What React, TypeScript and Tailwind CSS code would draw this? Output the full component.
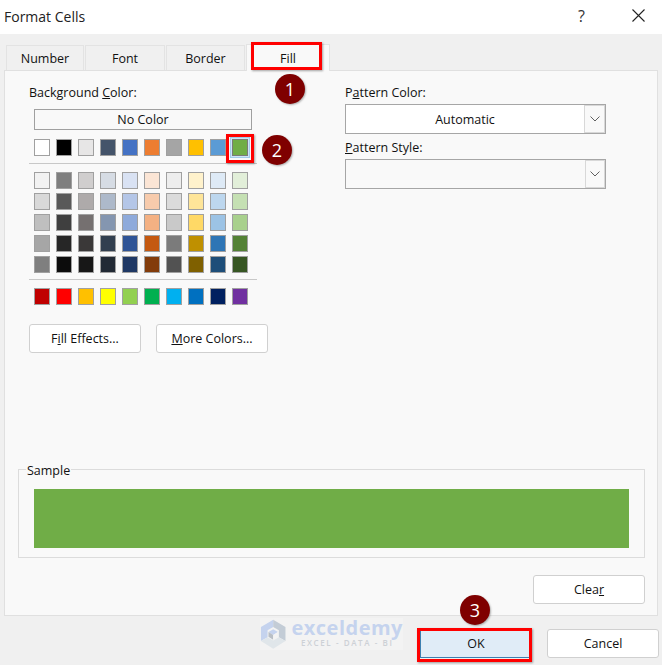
import React from 'react';

const themeRow = ['#ffffff', '#000000', '#e7e6e6', '#44546a', '#4472c4', '#ed7d31', '#a5a5a5', '#ffc000', '#5b9bd5', '#70ad47'];

const tintRows = [
  ['#f2f2f2', '#7f7f7f', '#d0cece', '#d6dce4', '#d9e2f3', '#fbe5d5', '#ededed', '#fff2cc', '#deeaf6', '#e2efd9'],
  ['#d9d9d9', '#595959', '#aeaaaa', '#adb9ca', '#b4c6e7', '#f7cbac', '#dbdbdb', '#fee599', '#bdd7ee', '#c5e0b3'],
  ['#bfbfbf', '#3f3f3f', '#757070', '#8496b0', '#8eaadb', '#f4b183', '#c9c9c9', '#ffd966', '#9cc3e5', '#a8d08d'],
  ['#a6a6a6', '#262626', '#3a3838', '#323f4f', '#2f5496', '#c45911', '#7b7b7b', '#bf9000', '#2e75b5', '#538135'],
  ['#7f7f7f', '#0c0c0c', '#171717', '#222a35', '#1f3864', '#833c0b', '#525252', '#7f6000', '#1e4e79', '#375623'],
];

const standardRow = ['#c00000', '#ff0000', '#ffc000', '#ffff00', '#92d050', '#00b050', '#00b0f0', '#0070c0', '#002060', '#7030a0'];

const Swatches: React.FC<{ colors: string[]; selected?: number }> = ({ colors, selected }) => (
  <div className="flex gap-[6px]">
    {colors.map((color, i) => (
      <div
        key={i}
        className={`w-[16px] h-[17px] border ${i === selected ? 'border-[#7a7a7a] shadow-[0_0_0_1px_#cde4f7,0_0_0_2px_#a3cbea]' : 'border-[#a0a0a0]'}`}
        style={{ backgroundColor: color }}
      />
    ))}
  </div>
);

const Marker: React.FC<{ n: number; className: string }> = ({ n, className }) => (
  <div className={`absolute z-20 w-[30px] h-[30px] rounded-full bg-[#7f0000] text-white text-[18px] flex items-center justify-center shadow-[1px_1px_2px_rgba(0,0,0,0.3)] ${className}`}>
    {n}
  </div>
);

const Tab: React.FC<{ label: string; width: string }> = ({ label, width }) => (
  <div className={`${width} h-[25px] pt-[2px] bg-[#f0f0f0] border border-b-0 border-[#e3e3e3] flex items-center justify-center`}>
    {label}
  </div>
);

const PushButton: React.FC<{ children: React.ReactNode }> = ({ children }) => (
  <div className="w-[112px] h-[29px] bg-white border border-[#d0d0d0] rounded-[3px] flex items-center justify-center">
    {children}
  </div>
);

const Chevron: React.FC = () => (
  <svg width="10" height="6" viewBox="0 0 10 6" fill="none" stroke="#606060" strokeWidth="1">
    <path d="M0.5 0.5 L5 5 L9.5 0.5" />
  </svg>
);

const App: React.FC = () => {
  return (
    <div className="relative w-[662px] h-[665px] overflow-hidden bg-[#f0f0f0] text-[12.5px] text-[#111] font-['Open_Sans','Noto_Sans',sans-serif]">
      {/* title bar */}
      <div className="h-[34px] bg-white flex items-center justify-between pl-[4px] pr-[17px] pb-[2px]">
        <span className="text-[14px] text-[#222]">Format Cells</span>
        <div className="flex items-center gap-[47px] -mt-[1px]">
          <span className="text-[16px] text-[#333]">?</span>
          <svg width="13" height="13" viewBox="0 0 13 13" stroke="#222" strokeWidth="1.1">
            <path d="M0.5 0.5 L12.5 12.5 M12.5 0.5 L0.5 12.5" />
          </svg>
        </div>
      </div>

      {/* tabs */}
      <div className="h-[36px] flex items-end pl-[6px] gap-px">
        <Tab label="Number" width="w-[78px]" />
        <Tab label="Font" width="w-[80px]" />
        <Tab label="Border" width="w-[79px]" />
        <div className="w-[84px] h-[27px] pt-[2px] bg-[#f9f9f9] border border-b-0 border-[#e3e3e3] flex items-center justify-center -mb-px z-10">
          Fill
        </div>
      </div>

      {/* fill page */}
      <div className="ml-[4px] w-[654px] h-[546px] bg-[#f9f9f9] border border-[#e0e0e0] flex flex-col">
        <div className="h-[398px] flex pl-[24px] pt-[11px]">
          <div className="w-[316px]">
            <div className="h-[20px] pt-px leading-[20px]">Background <u>C</u>olor:</div>
            <div className="ml-[5px] mt-[7px] w-[218px] h-[21px] pt-[2px] bg-[#f9f9f9] border border-[#a0a0a0] flex items-center justify-center">
              No Color
            </div>
            <div className="ml-[5px] mt-[9px]">
              <Swatches colors={themeRow} selected={9} />
            </div>
            <div className="w-[228px] h-px bg-[#c8c8c8] mt-[7px]" />
            <div className="ml-[5px] mt-[8px] flex flex-col gap-[4px]">
              {tintRows.map((row, i) => (
                <Swatches key={i} colors={row} />
              ))}
            </div>
            <div className="w-[228px] h-px bg-[#c8c8c8] mt-[6px]" />
            <div className="ml-[5px] mt-[8px]">
              <Swatches colors={standardRow} />
            </div>
            <div className="flex gap-[15px] mt-[19px]">
              <PushButton>
                <span className="pt-[2px]">F<u>i</u>ll Effects...</span>
              </PushButton>
              <PushButton>
                <span className="pt-[2px]"><u>M</u>ore Colors...</span>
              </PushButton>
            </div>
          </div>

          <div className="w-[261px]">
            <div className="h-[20px] pt-px leading-[20px]">P<u>a</u>ttern Color:</div>
            <div className="mt-[2px] h-[30px] bg-white border border-[#a6a6a6] flex">
              <div className="flex-1 pt-[2px] flex items-center justify-center">Automatic</div>
              <div className="w-[21px] border border-[#d8d8d8] bg-[#f9f9f9] flex items-center justify-center">
                <Chevron />
              </div>
            </div>
            <div className="h-[20px] pt-px leading-[20px] mt-[3px]"><u>P</u>attern Style:</div>
            <div className="mt-[2px] h-[30px] bg-[#f9f9f9] border border-[#a6a6a6] flex justify-end">
              <div className="w-[20px] border border-[#d8d8d8] flex items-center justify-center">
                <Chevron />
              </div>
            </div>
          </div>
        </div>

        {/* sample */}
        <div className="relative ml-[13px] w-[627px] h-[89px] border border-[#dcdcdc] pl-[15px] pt-[19px]">
          <span className="absolute left-[7px] top-[-8px] px-px bg-[#f9f9f9] leading-[18px]">Sample</span>
          <div className="w-[595px] h-[59px] bg-[#70ad47]" />
        </div>

        <div className="flex justify-end pr-[12px] mt-[17px]">
          <PushButton>
            <span className="pt-px">Clea<u>r</u></span>
          </PushButton>
        </div>
      </div>

      {/* footer buttons */}
      <div className="flex justify-end gap-[15px] pr-[3px] mt-[13px]">
        <div className="w-[112px] h-[29px] pt-[2px] bg-[#e0ecf7] border border-[#3c7fb1] flex items-center justify-center">OK</div>
        <PushButton>
          <span className="pt-[2px]">Cancel</span>
        </PushButton>
      </div>

      {/* watermark */}
      <div className="absolute left-[260px] top-[618px] w-[143px] h-[32px] bg-[#f3f3f3] flex items-center gap-[5px]">
        <svg width="28" height="32" viewBox="0 0 28 32">
          <path d="M14 1 L1 8.5 L1 23.5 L8 19.5 L8 12 L14 8.5 Z" fill="#c5d3ee" />
          <path d="M14 1 L27 8.5 L27 23.5 L20 19.5 L20 12 L14 8.5 Z" fill="#c3ccd6" />
          <path d="M1 23.5 L8 19.5 L14 23 L20 19.5 L27 23.5 L14 31.5 Z" fill="#e0e6ea" />
          <path d="M14 11 L19 14 L14 17 L9 14 Z" fill="#c5d3ee" />
          <path d="M9 14 L14 17 L14 22 L9 19 Z" fill="#b9bfc6" />
          <path d="M19 14 L14 17 L14 22 L19 19 Z" fill="#f3f3f3" />
        </svg>
        <div className="flex flex-col items-center -mt-[2px]">
          <span className="text-[20px] leading-[20px] font-bold tracking-[0.5px] text-[#c5d3ee]">exceldemy</span>
          <span className="text-[8px] leading-[10px] font-semibold tracking-[1.6px] text-[#cdd1d6]">EXCEL - DATA - BI</span>
        </div>
      </div>

      {/* annotations */}
      <div className="absolute z-20 left-[251px] top-[42px] w-[71px] h-[28px] border-[3px] border-[#ff0000] shadow-[1px_1px_2px_rgba(0,0,0,0.35)]" />
      <div className="absolute z-20 left-[226px] top-[134px] w-[28px] h-[29px] border-[3px] border-[#ff0000] shadow-[1px_1px_2px_rgba(0,0,0,0.35)]" />
      <div className="absolute z-20 left-[417px] top-[628px] w-[115px] h-[34px] border-[3px] border-[#ff0000] shadow-[1px_1px_2px_rgba(0,0,0,0.35)]" />
      <Marker n={1} className="left-[275px] top-[74px]" />
      <Marker n={2} className="left-[262px] top-[135px]" />
      <Marker n={3} className="left-[460px] top-[595px]" />
    </div>
  );
};

export default App;
